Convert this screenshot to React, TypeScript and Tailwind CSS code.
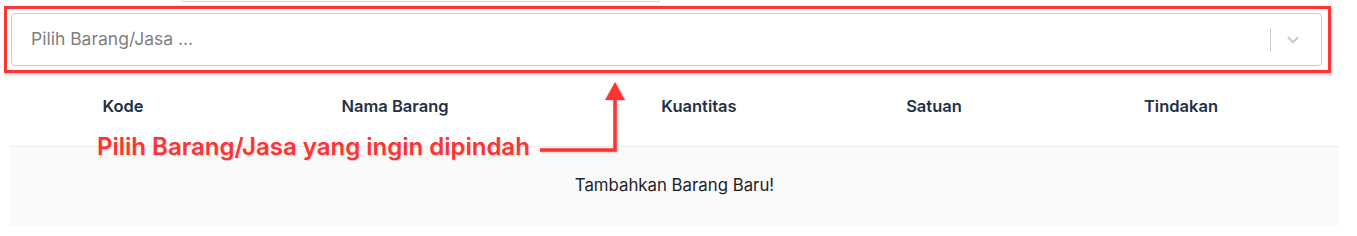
import { ChevronDown } from "lucide-react";

const columns = [
  { label: "Kode", width: "w-[226px]" },
  { label: "Nama Barang", width: "w-[318px]" },
  { label: "Kuantitas", width: "w-[290px]" },
  { label: "Satuan", width: "w-[180px]" },
  { label: "Tindakan", width: "w-[314px]" },
];

export default function App() {
  return (
    <main className="relative h-[236px] w-[1357px] overflow-hidden bg-white font-['Inter',sans-serif]">
      {/* edge of the card above */}
      <div className="ml-[181px] h-[2px] w-[479px] rounded-b border-b border-x border-[#d4d4d4] bg-white" />

      {/* highlighted select */}
      <div className="ml-[4px] mt-[4px] w-[1327px] border-[3px] border-[#ff3333] p-[4px] pr-[6px] shadow-[1px_2px_3px_rgba(0,0,0,0.18)]">
        <div className="flex h-[53px] items-center rounded border border-[#cccccc] bg-white">
          <span className="flex-1 pl-[19px] text-[17.5px] text-[#808080]">Pilih Barang/Jasa ...</span>
          <span className="h-[24px] w-px bg-[#cccccc]" />
          <span className="flex w-[50px] items-center pl-[13px] text-[#cccccc]">
            <ChevronDown className="h-[18px] w-[18px]" strokeWidth={3} />
          </span>
        </div>
      </div>

      {/* table */}
      <div className="ml-[10px] mt-[12px] w-[1329px]">
        <div className="flex h-[61px] items-start pt-[9px]">
          {columns.map((col) => (
            <div
              key={col.label}
              className={`${col.width} text-center text-[16.5px] font-semibold text-[#243044]`}
            >
              {col.label}
            </div>
          ))}
        </div>
        <div className="flex h-[80px] items-center justify-center border-t border-[#ececec] bg-[#fafafa] pb-[1px] text-[16.8px] text-[#1f2329]">
          Tambahkan Barang Baru!
        </div>
      </div>

      {/* annotation */}
      <div className="absolute left-[97px] top-[131px] text-[24px] leading-[32px] font-semibold text-[#ff3333] [text-shadow:1px_1px_1px_rgba(0,0,0,0.12)]">
        Pilih Barang/Jasa yang ingin dipindah
      </div>
      <svg
        className="absolute left-[530px] top-[78px]"
        width="100"
        height="80"
        viewBox="0 0 100 80"
      >
        <g style={{ filter: "drop-shadow(1px 1px 1px rgba(0,0,0,0.2))" }}>
          <path d="M10 72 H85 V18" fill="none" stroke="#ff3333" strokeWidth="3.5" />
          <path d="M85 4 L95 22 L75 22 Z" fill="#ff3333" />
        </g>
      </svg>
    </main>
  );
}
